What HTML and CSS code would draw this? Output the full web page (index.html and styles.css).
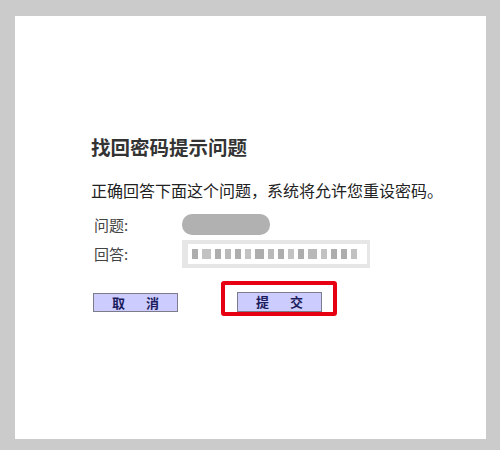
FILE: index.html
```html
<!DOCTYPE html>
<html lang="zh-CN">
<head>
<meta charset="utf-8">
<title>找回密码提示问题</title>
<link rel="stylesheet" href="styles.css">
</head>
<body>
<div class="panel">
  <h1 class="title">找回密码提示问题</h1>
  <p class="desc">正确回答下面这个问题，系统将允许您重设密码。</p>
  <div class="form">
    <div class="label">问题:</div>
    <div class="field"><span class="pill"></span></div>
    <div class="label">回答:</div>
    <div class="field">
      <div class="answer">
        <span class="b c1"></span><span class="b c2 w"></span><span class="b c1"></span><span class="b c3"></span><span class="b c1"></span><span class="b c2"></span><span class="b c1 w"></span><span class="b c3"></span><span class="b c1"></span><span class="b c2"></span><span class="b c1"></span><span class="b c3 w"></span><span class="b c2"></span><span class="b c1"></span><span class="b c1"></span><span class="b c2"></span>
      </div>
    </div>
  </div>
  <div class="actions">
    <button class="btn btn-cancel" type="button"><span>取</span><span>消</span></button>
    <div class="highlight">
      <button class="btn" type="submit"><span>提</span><span>交</span></button>
    </div>
  </div>
</div>
</body>
</html>
```
FILE: styles.css
```css
html, body {
  margin: 0;
  padding: 0;
}
body {
  background: #cbcbcb;
  width: 500px;
  height: 450px;
  overflow: hidden;
  font-family: "Noto Sans CJK SC", "Microsoft YaHei", sans-serif;
}
.panel {
  box-sizing: border-box;
  margin: 16px 0 0 15px;
  width: 471px;
  height: 423px;
  background: #ffffff;
  padding: 121px 0 0 76px;
}
.title {
  margin: 0;
  font-size: 19.5px;
  line-height: 20px;
  font-weight: bold;
  color: #333333;
}
.desc {
  margin: 25px 0 0 0;
  font-size: 16px;
  line-height: 16px;
  color: #222222;
}
.form {
  margin-top: 16px;
  display: grid;
  grid-template-columns: 91px auto;
  grid-template-rows: 21px 28px;
  row-gap: 5px;
  align-items: center;
}
.label {
  padding-left: 3px;
  font-size: 15px;
  line-height: 16px;
  color: #444444;
}
.field {
  display: flex;
  align-items: center;
  height: 100%;
}
.pill {
  display: block;
  width: 88px;
  height: 21px;
  border-radius: 10px;
  background: #b1b1b1;
}
.answer {
  box-sizing: border-box;
  width: 188px;
  height: 28px;
  border: solid #e6e6e6;
  border-width: 4px 3px 4px 6px;
  background: #ffffff;
  display: flex;
  align-items: center;
  padding-left: 4px;
  gap: 4px;
}
.b {
  display: block;
  width: 6px;
  height: 10px;
  background: #b4b4b4;
}
.b.w { width: 9px; }
.c1 { background: #adadad; }
.c2 { background: #c2c2c2; }
.c3 { background: #b9b9b9; }
.actions {
  margin-top: 13px;
  display: flex;
  align-items: flex-start;
}
.btn {
  box-sizing: border-box;
  width: 85px;
  height: 20px;
  margin: 0;
  padding: 0;
  border: 1px solid #7c7c8c;
  background: #ccccff;
  color: #1c1c5c;
  font-family: "Noto Sans CJK SC", sans-serif;
  font-size: 13px;
  font-weight: bold;
  line-height: 18px;
  display: flex;
  justify-content: center;
  align-items: center;
  gap: 21px;
}
.btn-cancel {
  margin: 12px 0 0 2px;
  height: 19px;
}
.highlight {
  box-sizing: border-box;
  margin-left: 43px;
  width: 116px;
  height: 35px;
  border: 4px solid #e60012;
  border-radius: 3px;
  padding: 7px 0 0 12px;
}
```
